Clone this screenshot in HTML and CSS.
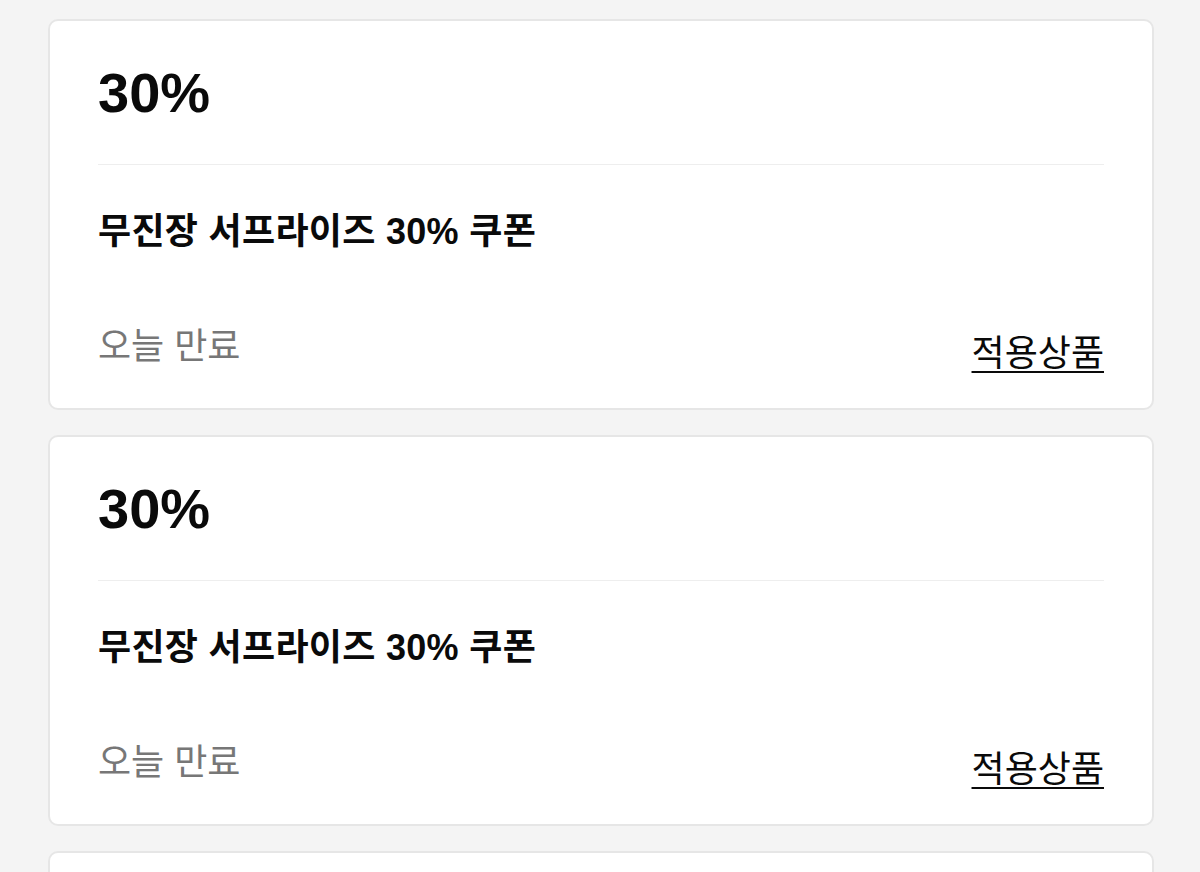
FILE: index.html
```html
<!DOCTYPE html>
<html lang="ko">
<head>
    <meta charset="UTF-8">
    <meta name="viewport" content="width=device-width, initial-scale=1.0">
    <title>쿠폰</title>
    <link rel="stylesheet" href="styles.css">
</head>
<body>
    <div class="coupon-list">
        <div class="coupon">
            <div class="coupon-amount">30%</div>
            <div class="coupon-name">무진장 서프라이즈 30% 쿠폰</div>
            <div class="coupon-footer">
                <span class="coupon-expire">오늘 만료</span>
                <a href="#" class="coupon-link">적용상품</a>
            </div>
        </div>
        <div class="coupon">
            <div class="coupon-amount">30%</div>
            <div class="coupon-name">무진장 서프라이즈 30% 쿠폰</div>
            <div class="coupon-footer">
                <span class="coupon-expire">오늘 만료</span>
                <a href="#" class="coupon-link">적용상품</a>
            </div>
        </div>
        <div class="coupon">
            <div class="coupon-amount">30%</div>
            <div class="coupon-name">무진장 서프라이즈 30% 쿠폰</div>
            <div class="coupon-footer">
                <span class="coupon-expire">오늘 만료</span>
                <a href="#" class="coupon-link">적용상품</a>
            </div>
        </div>
    </div>
</body>
</html>
```

FILE: styles.css
```css
body {
    margin: 0;
    background-color: #f4f4f4;
    font-family: "Liberation Sans", "Noto Sans CJK KR", sans-serif;
    color: #0a0a0a;
}

.coupon-list {
    display: flex;
    flex-direction: column;
    gap: 25px;
    padding: 19px 46px 0 48px;
}

/* one coupon card */
.coupon {
    background-color: #fff;
    border: 2px solid #e6e6e6;
    border-radius: 10px;
    padding: 0 48px;
    height: 387px;
    flex-shrink: 0;
}

.coupon-amount {
    font-size: 56px;
    font-weight: 700;
    line-height: 143px;
    height: 143px;
    border-bottom: 1px solid #eeeeee;
}

.coupon-name {
    font-size: 36px;
    font-weight: 700;
    line-height: 50px;
    margin-top: 42px;
    letter-spacing: 0.3px;
}

.coupon-footer {
    display: flex;
    justify-content: space-between;
    align-items: flex-end;
    margin-top: 65px;
}

.coupon-expire {
    font-size: 36px;
    color: #777;
    line-height: 50px;
}

.coupon-link {
    font-size: 36px;
    color: #0a0a0a;
    line-height: 50px;
    text-decoration: underline;
    text-underline-offset: 5px;
    text-decoration-thickness: 2px;
    margin-bottom: -7px;
}
```
